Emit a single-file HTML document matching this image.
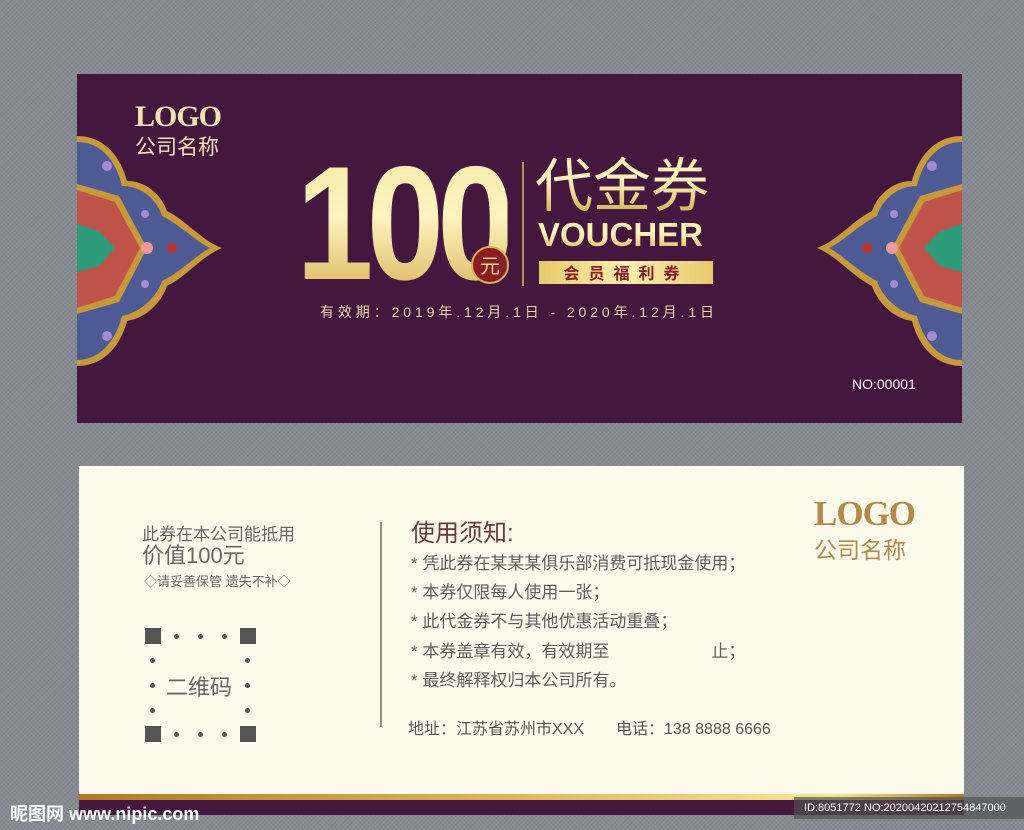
<!DOCTYPE html>
<html><head><meta charset="utf-8"><style>
*{margin:0;padding:0;box-sizing:border-box}
body{width:1024px;height:830px;overflow:hidden;position:relative;font-family:"Liberation Sans","Noto Sans CJK SC",sans-serif;
background:#868a91;background-image:repeating-linear-gradient(45deg,rgba(255,255,255,.06) 0 1px,transparent 1px 3px),repeating-linear-gradient(-45deg,rgba(0,0,0,.06) 0 1px,transparent 1px 3px)}
.a{position:absolute;white-space:nowrap}
.top{left:77px;top:74px;width:885px;height:349px;background:#44173f}
.gold{background:linear-gradient(180deg,#f6e9a8,#fff3bf 45%,#d8b055);-webkit-background-clip:text;background-clip:text;color:transparent}
.bot{left:79px;top:466px;width:885px;height:334px;background:#fefbec}
.g{color:#666}
.sq{position:absolute;width:16px;height:16px;background:#555}
.dt{position:absolute;width:5px;height:5px;border-radius:50%;background:#555}
</style></head><body>
<div class="a top"></div>
<svg class="a" style="left:77px;top:136px" width="146" height="232" viewBox="0 0 146 232">
<path d="M0 0 C30 0 45 25 50 45 C70 45 85 60 90 75 C110 85 125 105 145 112 C125 120 110 140 90 150 C85 165 70 182 50 185 C45 205 30 230 0 230Z" fill="#c69a3a"/>
<path d="M0 6 C26 6 40 28 45 50 C65 50 80 64 85 80 C105 90 118 105 133 112 C118 120 105 135 85 145 C80 160 65 176 45 180 C40 200 26 224 0 224Z" fill="#4e5a93"/>
<path d="M0 48 L42 60 L70 112 L42 166 L0 178Z" fill="#c69a3a"/>
<path d="M0 54 L38 66 L63 112 L38 160 L0 172Z" fill="#c0544a"/>
<path d="M0 88 L22 95 L38 112 L22 130 L0 136Z" fill="#2d9b79"/>
<circle cx="70" cy="112" r="6" fill="#e99"/><circle cx="95" cy="112" r="5" fill="#b33"/>
<circle cx="30" cy="30" r="5" fill="#a78bd0"/><circle cx="30" cy="200" r="5" fill="#a78bd0"/>
<circle cx="68" cy="78" r="4" fill="#a78bd0"/><circle cx="68" cy="148" r="4" fill="#a78bd0"/>
</svg>
<svg class="a" style="left:816px;top:136px;transform:scaleX(-1)" width="146" height="232" viewBox="0 0 146 232">
<path d="M0 0 C30 0 45 25 50 45 C70 45 85 60 90 75 C110 85 125 105 145 112 C125 120 110 140 90 150 C85 165 70 182 50 185 C45 205 30 230 0 230Z" fill="#c69a3a"/>
<path d="M0 6 C26 6 40 28 45 50 C65 50 80 64 85 80 C105 90 118 105 133 112 C118 120 105 135 85 145 C80 160 65 176 45 180 C40 200 26 224 0 224Z" fill="#4e5a93"/>
<path d="M0 48 L42 60 L70 112 L42 166 L0 178Z" fill="#c69a3a"/>
<path d="M0 54 L38 66 L63 112 L38 160 L0 172Z" fill="#c0544a"/>
<path d="M0 88 L22 95 L38 112 L22 130 L0 136Z" fill="#2d9b79"/>
<circle cx="70" cy="112" r="6" fill="#e99"/><circle cx="95" cy="112" r="5" fill="#b33"/>
<circle cx="30" cy="30" r="5" fill="#a78bd0"/><circle cx="30" cy="200" r="5" fill="#a78bd0"/>
<circle cx="68" cy="78" r="4" fill="#a78bd0"/><circle cx="68" cy="148" r="4" fill="#a78bd0"/>
</svg>
<div class="a" style="left:135px;top:100px;font:bold 30px 'Liberation Serif',serif;color:#f3e3b0;letter-spacing:-1px">LOGO</div>
<div class="a" style="left:135px;top:131px;font-size:21px;color:#f3e3b0">公司名称</div>
<div class="a gold" style="left:296px;top:143px;font:bold 162px/1 'Liberation Sans',sans-serif;letter-spacing:-8px;transform:scaleX(.86);transform-origin:left">100</div>
<div class="a" style="left:471px;top:246px;width:38px;height:38px;border-radius:50%;background:#8a1d22;border:2px solid #d8b055;color:#f3d98a;font-size:20px;line-height:33px;text-align:center;font-family:'Noto Sans CJK SC',sans-serif">元</div>
<div class="a" style="left:522px;top:162px;width:2px;height:124px;background:#b8924a"></div>
<div class="a gold" style="left:535px;top:150px;font-size:58px;line-height:1.1;font-family:'Noto Sans CJK SC',sans-serif;letter-spacing:0px">代金券</div>
<div class="a gold" style="left:538px;top:216px;font:bold 33px 'Liberation Sans',sans-serif">VOUCHER</div>
<div class="a" style="left:539px;top:261px;width:174px;height:23px;background:linear-gradient(90deg,#e8c96b,#fbeeb0,#e8c96b);color:#8a1d22;font-size:16px;line-height:23px;text-align:center;letter-spacing:9px;font-weight:bold;font-family:'Noto Sans CJK SC',sans-serif">会员福利券</div>
<div class="a" style="left:320px;top:302px;color:#ead8a6;font-size:14px;letter-spacing:3.9px">有效期：2019年.12月.1日 - 2020年.12月.1日</div>
<div class="a" style="left:852px;top:376px;color:#fff;font-size:14px">NO:00001</div>

<div class="a bot"></div>
<div class="a" style="left:79px;top:794px;width:885px;height:6px;background:linear-gradient(90deg,#b07a2a,#dcb862 50%,#f7e796 85%,#b07a2a)"></div>
<div class="a" style="left:79px;top:800px;width:885px;height:15px;background:#44173f"></div>
<div class="a g" style="left:142px;top:520px;font-size:17px">此券在本公司能抵用</div>
<div class="a g" style="left:142px;top:538px;font-size:22px">价值100元</div>
<div class="a g" style="left:144px;top:571px;font-size:13px">◇请妥善保管 遗失不补◇</div>
<div class="sq" style="left:145px;top:628px"></div><div class="sq" style="left:240px;top:628px"></div>
<div class="sq" style="left:145px;top:726px"></div><div class="sq" style="left:240px;top:726px"></div>
<div class="dt" style="left:174px;top:634px"></div><div class="dt" style="left:198px;top:634px"></div><div class="dt" style="left:222px;top:634px"></div>
<div class="dt" style="left:174px;top:732px"></div><div class="dt" style="left:198px;top:732px"></div><div class="dt" style="left:222px;top:732px"></div>
<div class="dt" style="left:150px;top:658px"></div><div class="dt" style="left:150px;top:683px"></div><div class="dt" style="left:150px;top:708px"></div>
<div class="dt" style="left:245px;top:658px"></div><div class="dt" style="left:245px;top:683px"></div><div class="dt" style="left:245px;top:708px"></div>
<div class="a g" style="left:166px;top:670px;font-size:22px">二维码</div>
<div class="a" style="left:380px;top:522px;width:2px;height:205px;background:#a08c84"></div>
<div class="a" style="left:411px;top:513px;font-size:24px;color:#6a3a3a">使用须知:</div>
<div class="a" style="left:411px;top:549px;font-size:17px;line-height:29.2px;color:#5e5e5e">* 凭此券在某某某俱乐部消费可抵现金使用；<br>* 本券仅限每人使用一张；<br>* 此代金券不与其他优惠活动重叠；<br>* 本券盖章有效，有效期至　　　　　　止；<br>* 最终解释权归本公司所有。</div>
<div class="a" style="left:408px;top:715px;font-size:16px;color:#555">地址：江苏省苏州市XXX　　电话：138 8888 6666</div>
<div class="a" style="left:814px;top:494px;font:bold 35px 'Liberation Serif',serif;color:#b38a4b;letter-spacing:-1px">LOGO</div>
<div class="a" style="left:814px;top:531px;font-size:23px;color:#b38a4b">公司名称</div>
<div class="a" style="left:10px;top:800px;color:#fff;font-size:18px;font-weight:bold">昵图网 www.nipic.com</div>
<div class="a" style="left:794px;top:797px;width:230px;height:22px;background:rgba(80,80,80,.7);color:#fff;font-size:11px;line-height:22px;padding-left:10px">ID:8051772 NO:20200420212754847000</div>
</body></html>
